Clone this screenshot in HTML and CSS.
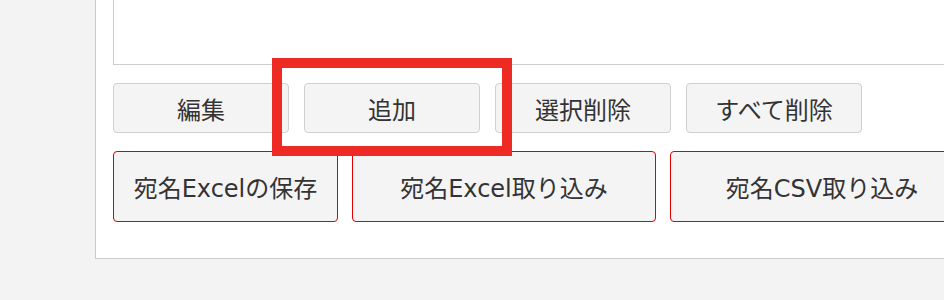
FILE: index.html
```html
<!DOCTYPE html>
<html lang="ja">
<head>
    <meta charset="UTF-8">
    <title>宛名編集</title>
    <link rel="stylesheet" href="styles.css">
</head>
<body>
    <div class="panel">
        <div class="memo"></div>
        <!-- 一覧操作 -->
        <div class="btn-row">
            <button class="btn">編集</button>
            <button class="btn">追加</button>
            <button class="btn">選択削除</button>
            <button class="btn">すべて削除</button>
        </div>
        <!-- ファイル操作 -->
        <div class="btn-row file-row">
            <button class="btn btn-file btn-save">宛名Excelの保存</button>
            <button class="btn btn-file">宛名Excel取り込み</button>
            <button class="btn btn-file">宛名CSV取り込み</button>
        </div>
    </div>
    <div class="highlight"></div>
</body>
</html>
```

FILE: styles.css
```css
/* 全体 */
body, html {
    margin: 0;
    padding: 0;
    height: 100%;
    overflow: hidden;
}
body {
    background-color: #f3f3f3;
    font-family: "DejaVu Sans", "Noto Sans CJK JP", sans-serif;
    color: #333;
}
/* 白いパネル */
.panel {
    margin: -41px 0 0 95px;
    width: 1000px;
    padding: 0 0 36px 17px;
    background-color: #fff;
    border: 1px solid #ccc;
}
/* テキスト欄 */
.memo {
    box-sizing: border-box;
    width: 900px;
    height: 105px;
    border: 1px solid #ccc;
}
/* ボタン行 */
.btn-row {
    display: flex;
    gap: 15px;
    margin-top: 18px;
}
.btn {
    box-sizing: border-box;
    width: 176px;
    height: 50px;
    padding: 0;
    background-color: #f4f4f4;
    border: 1px solid #d0d0d0;
    border-radius: 4px;
    color: #333;
    font-family: inherit;
    font-size: 24px;
}
.file-row {
    gap: 14px;
}
.btn-file {
    width: 304px;
    height: 71px;
    border-color: #e00000;
}
.btn-save {
    width: 225px;
}
/* 赤枠の強調 */
.highlight {
    position: absolute;
    left: 272px;
    top: 58px;
    width: 240px;
    height: 98px;
    box-sizing: border-box;
    border: 10px solid #ee2a24;
    pointer-events: none;
}
```
